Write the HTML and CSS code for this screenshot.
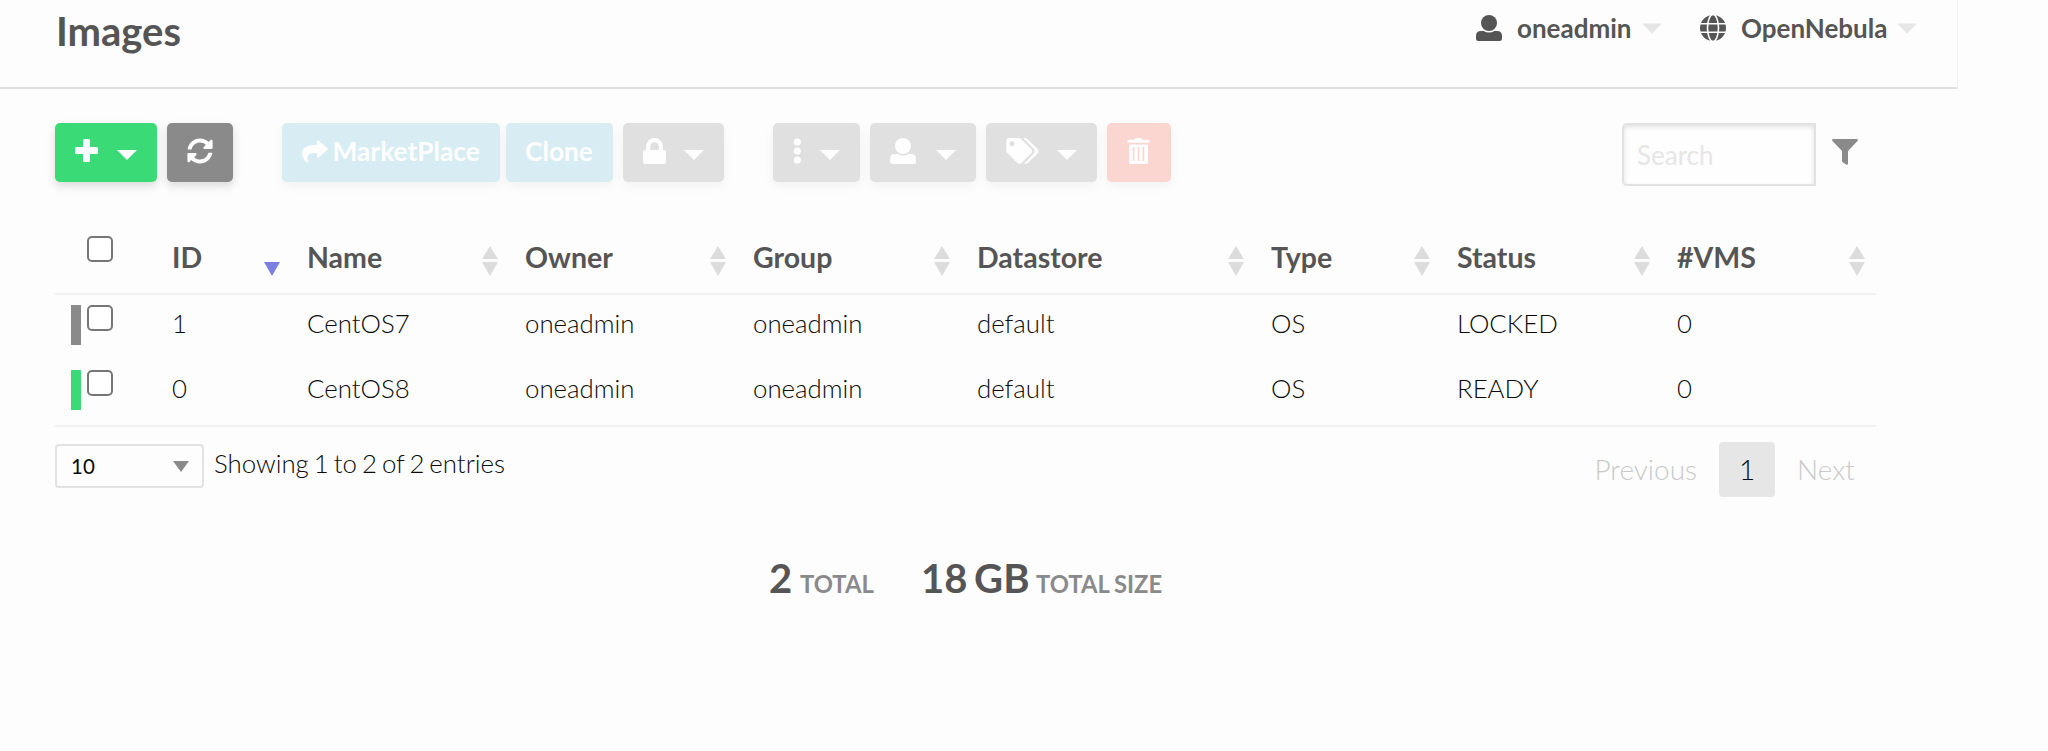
FILE: index.html
```html
<!DOCTYPE html>
<html lang="en">
<head>
    <meta charset="UTF-8">
    <meta name="viewport" content="width=device-width, initial-scale=1.0">
    <title>OpenNebula - Images</title>
    <link rel="stylesheet" href="styles.css">
</head>
<body>
    <!-- icons used more than once -->
    <svg class="defs">
        <symbol id="user" viewBox="0 0 26 26"><circle cx="13" cy="8" r="8"/><path d="M5 16h2.500q5.500 3 11 0H21q5 0 5 5v2.500q0 2.500-2.500 2.500h-21Q0 26 0 23.500V21q0-5 5-5z"/></symbol>
        <symbol id="caret" viewBox="0 0 20 10"><path d="M0 0h20L10 10z"/></symbol>
        <symbol id="sort" viewBox="0 0 16 30"><path class="up" d="M8 0l8 13H0z"/><path class="down" d="M0 16h16L8 30z"/></symbol>
    </svg>

    <header class="header">
        <h1 class="title">Images</h1>
        <nav class="menu">
            <a class="menu-item user"><svg class="menu-icon"><use href="#user"/></svg><span class="menu-text">oneadmin</span><svg class="menu-caret"><use href="#caret"/></svg></a>
            <a class="menu-item zone"><svg class="menu-icon" viewBox="0 0 26 26"><circle cx="13" cy="13" r="13"/><g fill="none" stroke="#fdfdfd" stroke-width="1.600"><ellipse cx="13" cy="13" rx="5.500" ry="13.500"/><path d="M0 8.800h26M0 17.200h26"/></g></svg><span class="menu-text">OpenNebula</span><svg class="menu-caret"><use href="#caret"/></svg></a>
        </nav>
    </header>

    <main class="content">
        <div class="toolbar">
            <button class="btn success create"><svg width="23" height="23" viewBox="0 0 23 23"><path d="M9.500 0h4q1.500 0 1.500 1.500V8h6.500Q23 8 23 9.500v4q0 1.500-1.500 1.500H15v6.500q0 1.500-1.500 1.500h-4Q8 23 8 21.500V15H1.500Q0 15 0 13.500v-4Q0 8 1.500 8H8V1.500Q8 0 9.500 0z"/></svg><svg class="caret"><use href="#caret"/></svg></button>
            <button class="btn refresh"><svg width="26" height="26" viewBox="0 0 512 512"><path d="M370.720 133.280C339.458 104.008 298.888 87.962 255.848 88c-77.458.068-144.328 53.178-162.791 126.850-1.344 5.363-6.122 9.150-11.651 9.150H24.103c-7.498 0-13.194-6.807-11.807-14.176C33.933 94.924 134.813 8 256 8c66.448 0 126.791 26.136 171.315 68.685L463.030 40.970C478.149 25.851 504 36.559 504 57.941V192c0 13.255-10.745 24-24 24H345.941c-21.382 0-32.090-25.851-16.971-40.971zM32 296h134.059c21.382 0 32.090 25.851 16.971 40.971l-41.750 41.750c31.262 29.273 71.835 45.319 114.876 45.280 77.418-.070 144.315-53.144 162.787-126.849 1.344-5.363 6.122-9.150 11.651-9.150h57.304c7.498 0 13.194 6.807 11.807 14.176C478.067 417.076 377.187 504 256 504c-66.448 0-126.791-26.136-171.315-68.685L48.970 471.030C33.851 486.149 8 475.441 8 454.059V320c0-13.255 10.745-24 24-24z"/></svg></button>

            <button class="btn primary market" disabled><svg width="26" height="23" viewBox="0 0 26 23"><path d="M15 1.200Q15 -.6 16.600.7L25.400 8q1 .9 0 1.800L16.600 17.400Q15 18.600 15 16.800V13Q7 12.700 5.800 16q-.7 2.200.4 5.500.4 1.800-1.200.900Q0 19 0 13.200 0 5 15 4.800z"/></svg><span>MarketPlace</span></button>
            <button class="btn primary clone" disabled><span>Clone</span></button>
            <button class="btn lock" disabled><svg width="23" height="26" viewBox="0 0 23 26"><path d="M2.500 12H3V8.500a8.500 8.500 0 0 1 17 0V12h.5q2.500 0 2.500 2.500v9q0 2.500-2.500 2.500h-18Q0 26 0 23.500v-9Q0 12 2.500 12zM7.200 12h8.600V8.500a4.300 4.300 0 0 0-8.600 0z"/></svg><svg class="caret"><use href="#caret"/></svg></button>

            <button class="btn more" disabled><svg width="8" height="26" viewBox="0 0 8 26"><circle cx="4.300" cy="4" r="3.600"/><circle cx="4.300" cy="13" r="3.600"/><circle cx="4.300" cy="22" r="3.600"/></svg><svg class="caret"><use href="#caret"/></svg></button>
            <button class="btn owner" disabled><svg width="26" height="26"><use href="#user"/></svg><svg class="caret"><use href="#caret"/></svg></button>
            <button class="btn labels" disabled><svg width="33" height="26" viewBox="0 0 640 512"><path d="M497.941 225.941L286.059 14.059A48 48 0 0 0 252.118 0H48C21.490 0 0 21.490 0 48v204.118a48 48 0 0 0 14.059 33.941l211.882 211.882c18.744 18.745 49.136 18.746 67.882 0l204.118-204.118c18.745-18.745 18.745-49.137 0-67.882zM112 160c-26.510 0-48-21.490-48-48s21.490-48 48-48 48 21.490 48 48-21.490 48-48 48zm513.941 133.823L421.823 497.941c-18.745 18.745-49.137 18.745-67.882 0l-.360-.360L527.640 323.522c16.999-16.999 26.360-39.600 26.360-63.640s-9.362-46.641-26.360-63.640L331.397 0h48.721a48 48 0 0 1 33.941 14.059l211.882 211.882c18.745 18.745 18.745 49.137 0 67.882z"/></svg><svg class="caret"><use href="#caret"/></svg></button>
            <button class="btn alert delete" disabled><svg width="23" height="26" viewBox="0 0 22 26"><path fill-rule="evenodd" d="M1 1.700h6L8 0h6l1 1.700h6q1 0 1 1v2H0v-2q0-1 1-1zM1.500 6.500h19v17q0 2.500-2.500 2.500H4q-2.500 0-2.500-2.500zM5.300 9v14h1.600V9zM10.200 9v14h1.600V9zM15.100 9v14h1.600V9z"/></svg></button>

            <input class="search" type="text" placeholder="Search">
            <svg class="filter" width="26" height="26" viewBox="0 0 26 26"><path d="M1 0h24q1.500.5.500 2L16 12v12.500q-.3 2-2 1L10.500 23Q10 22.500 10 22V12L.5 2Q-.5.5 1 0z"/></svg>
        </div>

        <table class="table">
            <colgroup>
                <col class="c-check"><col class="c-id"><col class="c-name"><col class="c-owner"><col class="c-group"><col class="c-ds"><col class="c-type"><col class="c-status"><col class="c-vms">
            </colgroup>
            <thead>
                <tr>
                    <th class="check"><input type="checkbox" class="box"></th>
                    <th><div class="head">ID<svg class="sort desc"><use href="#sort"/></svg></div></th>
                    <th><div class="head">Name<svg class="sort"><use href="#sort"/></svg></div></th>
                    <th><div class="head">Owner<svg class="sort"><use href="#sort"/></svg></div></th>
                    <th><div class="head">Group<svg class="sort"><use href="#sort"/></svg></div></th>
                    <th><div class="head">Datastore<svg class="sort"><use href="#sort"/></svg></div></th>
                    <th><div class="head">Type<svg class="sort"><use href="#sort"/></svg></div></th>
                    <th><div class="head">Status<svg class="sort"><use href="#sort"/></svg></div></th>
                    <th><div class="head">#VMS<svg class="sort"><use href="#sort"/></svg></div></th>
                </tr>
            </thead>
            <tbody>
                <tr>
                    <td class="check"><div class="state locked"><input type="checkbox" class="box"></div></td>
                    <td>1</td><td>CentOS7</td><td>oneadmin</td><td>oneadmin</td><td>default</td><td>OS</td><td>LOCKED</td><td>0</td>
                </tr>
                <tr>
                    <td class="check"><div class="state ready"><input type="checkbox" class="box"></div></td>
                    <td>0</td><td>CentOS8</td><td>oneadmin</td><td>oneadmin</td><td>default</td><td>OS</td><td>READY</td><td>0</td>
                </tr>
            </tbody>
        </table>

        <div class="table-footer">
            <div class="length">10<svg width="16" height="11" viewBox="0 0 16 11"><path d="M0 0h16L8 11z"/></svg></div>
            <span class="info">Showing 1 to 2 of 2 entries</span>
            <div class="pagination">
                <a class="page prev">Previous</a>
                <a class="page current">1</a>
                <a class="page next">Next</a>
            </div>
        </div>

        <div class="totals">
            <span class="amount two">2</span><span class="label total">TOTAL</span>
            <span class="amount size">18 GB</span><span class="label">TOTAL SIZE</span>
        </div>
    </main>
</body>
</html>
```
FILE: styles.css
```css
* {
    box-sizing: border-box;
}
body {
    margin: 0;
    height: 751px;
    overflow: hidden;
    background: #fdfdfd;
    color: #0a0a0a;
    font-family: Lato, "Liberation Sans", sans-serif;
    font-weight: 300;
}
svg {
    display: block;
    flex: none;
    fill: currentColor;
}
.defs {
    display: none;
}

/* top bar */
.header {
    display: flex;
    justify-content: space-between;
    width: 1958px;
    height: 89px;
    padding: 0 40px 0 56px;
    border-bottom: 2px solid #e0e0e0;
    border-right: 1px solid #f1f1f1;
    color: #555;
}
.title {
    margin: 7px 0 0;
    font-size: 40px;
    line-height: 48px;
    font-weight: 700;
}
.menu {
    display: flex;
    height: 56px;
}
.menu-item {
    display: flex;
    align-items: center;
    font-size: 26px;
    font-weight: 700;
}
.zone {
    margin-left: 38px;
}
.menu-icon {
    width: 26px;
    height: 26px;
    margin-right: 15px;
}
.menu-text {
    width: 115px;
    white-space: nowrap;
}
.zone .menu-text {
    width: 146px;
}
.menu-caret {
    width: 20px;
    height: 11px;
    margin-left: 10px;
    color: #e6e6e6;
}

/* action buttons */
.content {
    width: 1876px;
    padding: 34px 0 0 55px;
}
.toolbar {
    display: flex;
    align-items: flex-start;
    height: 107px;
}
.btn {
    display: flex;
    align-items: flex-start;
    height: 59px;
    margin: 0 10px 0 0;
    padding: 15px 20px 0;
    border: 0;
    border-radius: 5px;
    background: #8a8a8a;
    box-shadow: 0 4px 10px rgba(0, 0, 0, .14);
    color: #fefefe;
    font: 700 26.3px/26px Lato, sans-serif;
    white-space: nowrap;
}
.btn:disabled {
    background: #e0e0e0;
    box-shadow: 0 4px 12px rgba(0, 0, 0, .05);
}
.btn .caret {
    width: 20px;
    height: 10px;
    margin: 12px 0 0 auto;
}
.btn.success {
    background: #3adb76;
}
.btn.primary {
    background: #d7edf3;
}
.btn.alert {
    background: #fbd5cf;
}
.create {
    width: 101.5px;
}
.create svg:first-child {
    margin-top: 1px;
}
.refresh {
    width: 66px;
    margin-right: 49px;
}
.market {
    width: 218.5px;
    margin-right: 6px;
}
.market svg {
    margin: 2px 5px 0 0;
}
.clone {
    width: 106.5px;
    padding-left: 19px;
}
.lock {
    width: 101.5px;
    margin-right: 49px;
}
.more {
    width: 87px;
}
.owner {
    width: 105.5px;
}
.labels {
    width: 111px;
}
.delete {
    width: 64px;
}
.search {
    width: 194px;
    height: 63px;
    margin: 0 16px 0 auto;
    padding: 0 0 0 13px;
    border: 2px solid #e2e2e2;
    border-radius: 5px 0 0 5px;
    background: #fefefe;
    box-shadow: inset 0 2px 5px rgba(10, 10, 10, .12);
    font: 400 26px Lato, sans-serif;
}
.search::placeholder {
    color: #e6e6e6;
}
.filter {
    margin: 16px 18px 0 0;
    color: #8a8a8a;
}

/* datatable */
.table {
    width: 1821px;
    table-layout: fixed;
    border-collapse: collapse;
    border-bottom: 2px solid #f1f1f1;
    font-size: 25.8px;
}
.table th,
.table td {
    padding: 0 0 0 16px;
    text-align: left;
}
.table th {
    height: 64px;
    border-bottom: 2px solid #f1f1f1;
    color: #555;
    font-size: 28.5px;
    font-weight: 700;
}
.table td {
    height: 66px;
    padding-bottom: 9px;
}
.c-check { width: 101px; }
.c-id { width: 135px; }
.c-name { width: 218px; }
.c-owner { width: 228px; }
.c-group { width: 224px; }
.c-ds { width: 294px; }
.c-type { width: 186px; }
.c-status { width: 220px; }
.c-vms { width: 215px; }
.head {
    display: flex;
    align-items: center;
    justify-content: space-between;
    height: 62px;
    padding: 0 11px 10px 0;
}
.sort {
    width: 16px;
    height: 30px;
    margin-top: 8px;
    color: #dcdcdc;
}
.sort.desc {
    color: #7b7fe0;
    clip-path: inset(15px 0 0 0);
}
.table .check {
    padding: 0 0 0 16px;
    vertical-align: top;
}
.box {
    display: block;
    appearance: none;
    width: 26px;
    height: 26px;
    margin: 0;
    border: 2px solid #767676;
    border-radius: 5px;
    background: #fff;
}
.table th .box {
    margin: 6px 0 0 16px;
}
.state {
    height: 40px;
    margin-top: 10px;
    padding-left: 6px;
    border-left: 10px solid #8a8a8a;
}
.state.ready {
    border-color: #3adb76;
}

/* below the table */
.table-footer {
    display: flex;
    align-items: flex-start;
    padding-top: 15px;
}
.length {
    display: flex;
    align-items: center;
    justify-content: space-between;
    width: 149px;
    height: 44px;
    margin-top: 2px;
    padding: 0 13px 0 14px;
    border: 2px solid #e2e2e2;
    border-radius: 4px;
    font-size: 20.5px;
    font-weight: 400;
}
.length svg {
    color: #8a8a8a;
}
.info {
    margin: 5px 0 0 10px;
    font-size: 25.8px;
    line-height: 32px;
    word-spacing: -2px;
}
.pagination {
    display: flex;
    margin-left: auto;
    font-size: 28px;
    line-height: 55px;
    color: #cacaca;
}
.page.current {
    width: 56px;
    margin: 0 22px;
    border-radius: 4px;
    background: #e6e6e6;
    color: #0a0a0a;
    text-align: center;
}
.next {
    width: 79px;
}
.totals {
    display: flex;
    align-items: baseline;
    margin-top: 57px;
    padding-left: 714px;
    font-weight: 700;
    white-space: nowrap;
}
.amount {
    width: 31px;
    color: #555;
    font-size: 40px;
    word-spacing: -3px;
}
.amount.size {
    width: 115px;
}
.label {
    color: #8a8a8a;
    font-size: 23.8px;
    word-spacing: -1px;
}
.label.total {
    width: 121px;
}
```
